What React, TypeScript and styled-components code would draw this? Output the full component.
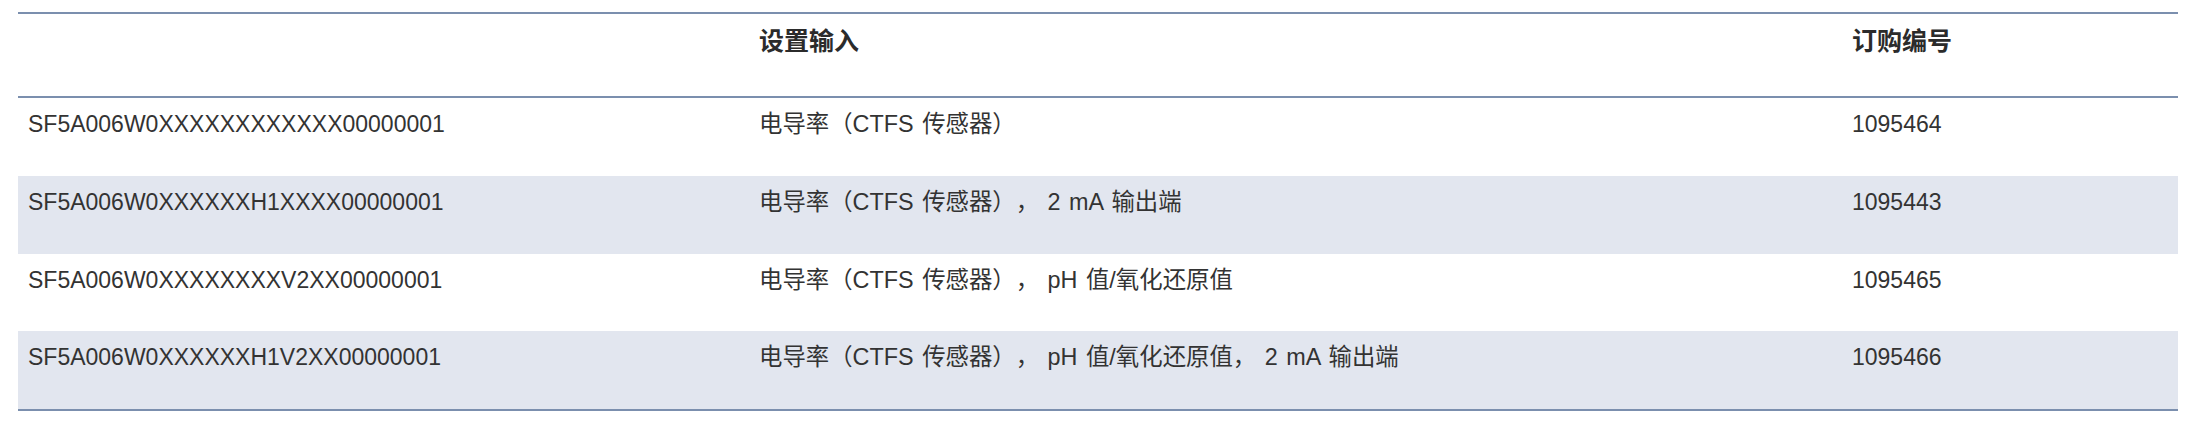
import React from "react";
import styled, { createGlobalStyle } from "styled-components";

const GlobalStyle = createGlobalStyle`
  html, body { margin: 0; padding: 0; background: #ffffff; }
  body {
    font-family: "Liberation Sans", Arial, "Noto Sans CJK SC", sans-serif;
    color: #333333;
    text-spacing-trim: space-all;
  }
`;

const Page = styled.div`
  padding: 12px 19px 0 18px;
`;

const Table = styled.div`
  display: grid;
  grid-template-columns: 731px 1093px 1fr;
  border-top: 2px solid #7b8fae;
  border-bottom: 2px solid #7b8fae;
`;

const HeaderCell = styled.div`
  box-sizing: border-box;
  height: 84px;
  padding: 10px 10px 0 10px;
  border-bottom: 2px solid #7b8fae;
  font-family: "Liberation Sans", Arial, "Noto Sans CJK SC", sans-serif;
  font-weight: 700;
  font-size: 25px;
  line-height: 34px;
  color: #2b2b2b;
`;

const Cell = styled.div<{ $striped: boolean; $h: number; $wide?: boolean }>`
  box-sizing: border-box;
  height: ${(p) => p.$h}px;
  padding: 10px 10px 0 10px;
  background: ${(p) => (p.$striped ? "#e2e6ef" : "#ffffff")};
  font-size: ${(p) => (p.$wide ? 23.4 : 23)}px;
  word-spacing: ${(p) => (p.$wide ? 2 : 0)}px;
  line-height: 32px;
  color: #333333;
  white-space: pre;
  text-spacing-trim: space-all;
`;

const rows = [
  { code: "SF5A006W0XXXXXXXXXXXX00000001", input: "电导率（CTFS 传感器）", order: "1095464" },
  { code: "SF5A006W0XXXXXXH1XXXX00000001", input: "电导率（CTFS 传感器）， 2 mA 输出端", order: "1095443" },
  { code: "SF5A006W0XXXXXXXXV2XX00000001", input: "电导率（CTFS 传感器）， pH 值/氧化还原值", order: "1095465" },
  { code: "SF5A006W0XXXXXXH1V2XX00000001", input: "电导率（CTFS 传感器）， pH 值/氧化还原值， 2 mA 输出端", order: "1095466" },
];

const heights = [78, 78, 77, 78];

export default function App() {
  return (
    <>
      <GlobalStyle />
      <Page>
        <Table>
          <HeaderCell />
          <HeaderCell>设置输入</HeaderCell>
          <HeaderCell>订购编号</HeaderCell>
          {rows.map((r, i) => (
            <React.Fragment key={r.order}>
              <Cell $striped={i % 2 === 1} $h={heights[i]}>{r.code}</Cell>
              <Cell $striped={i % 2 === 1} $h={heights[i]} $wide>{r.input}</Cell>
              <Cell $striped={i % 2 === 1} $h={heights[i]}>{r.order}</Cell>
            </React.Fragment>
          ))}
        </Table>
      </Page>
    </>
  );
}
